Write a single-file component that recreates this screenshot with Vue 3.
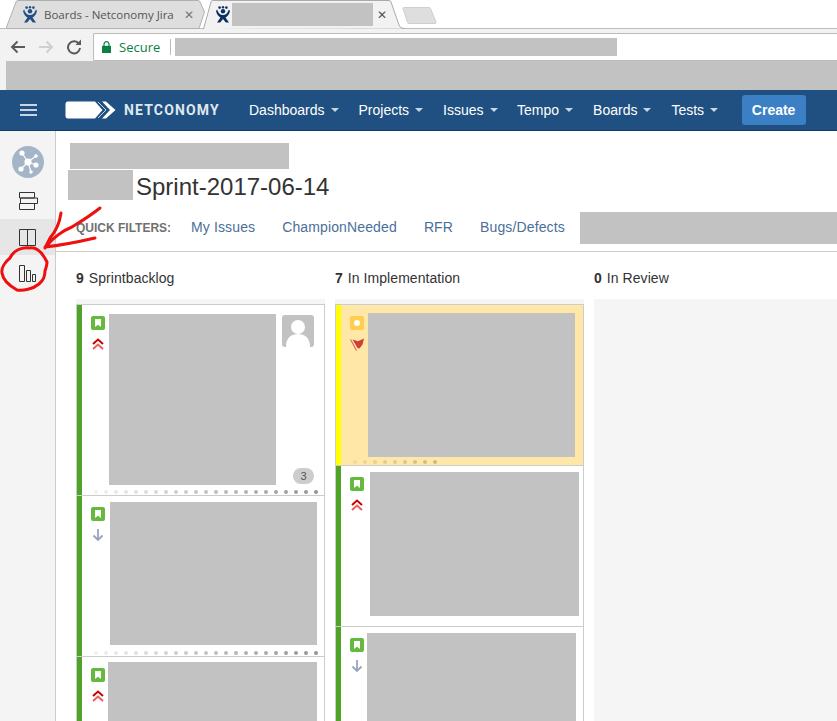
<script setup>
const navItems = ['Dashboards', 'Projects', 'Issues', 'Tempo', 'Boards', 'Tests']
const filters = ['My Issues', 'ChampionNeeded', 'RFR', 'Bugs/Defects']

const columns = [
  {
    count: 9,
    name: 'Sprintbacklog',
    cards: [
      { h: 191, top: 9, left: 4, w: 167, bh: 171, prio: 'high', dots: 23, avatar: true, badge: 3 },
      { h: 161, top: 6, left: 5, w: 207, bh: 143, prio: 'low', dots: 23 },
      { h: 70, top: 5, left: 3, w: 209, bh: 200, prio: 'high', dots: 0 }
    ]
  },
  {
    count: 7,
    name: 'In Implementation',
    cards: [
      { h: 161, top: 8, left: 4, w: 207, bh: 144, prio: 'flag', dots: 9, flagged: true },
      { h: 161, top: 6, left: 6, w: 209, bh: 144, prio: 'high', dots: 0 },
      { h: 100, top: 6, left: 3, w: 209, bh: 200, prio: 'low', dots: 0 }
    ]
  }
]

// 점점 진해지는 진행 점
function dotStyle(i, total) {
  const max = total > 10 ? 0.42 : 0.2
  return { background: `rgba(0,0,0,${(0.06 + (max - 0.06) * (i / (total - 1))).toFixed(3)})` }
}
function blockStyle(c) {
  return { marginTop: c.top + 'px', marginLeft: c.left + 'px', width: c.w + 'px', height: c.bh + 'px' }
}
</script>

<template>
  <div class="screen">
    <!-- 브라우저 탭 -->
    <div class="tabstrip">
      <div class="tab tab-back">
        <svg class="tab-shape" width="199" height="29" viewBox="0 0 199 29">
          <path d="M0 28.5 L10 2 Q10.5 0.5 12 0.5 H192 Q193.5 0.5 194 2 L198.5 12 L193 28.5 Z" fill="#dedede" stroke="#b0b0b0" />
        </svg>
        <svg class="favicon" width="14" height="17" viewBox="0 0 14 17">
          <circle cx="3.6" cy="1.6" r="1.3" fill="#205081" /><circle cx="7" cy="1.2" r="1.2" fill="#205081" /><circle cx="10.4" cy="1.6" r="1.3" fill="#205081" />
          <circle cx="7" cy="5.2" r="2.2" fill="#205081" />
          <path d="M1.2 3.5 C2.5 8 5 9 7 9 C9 9 11.5 8 12.8 3.5 L14 5 C13 9 11 11 9.5 11.5 L13 16.5 H9.8 L7 13 L4.2 16.5 H1 L4.5 11.5 C3 11 1 9 0 5 Z" fill="#205081" />
        </svg>
        <span class="tab-title">Boards - Netconomy Jira</span>
        <span class="tab-x">✕</span>
      </div>
      <div class="tab tab-front">
        <svg class="tab-shape" width="202" height="30" viewBox="0 0 202 30">
          <path d="M0 29 H0.5 L8 2 Q8.5 0.5 10 0.5 H186 Q187.5 0.5 188 2 L196 25 Q197 28.5 201 28.5 H202" fill="#f2f2f2" stroke="#aaa" />
        </svg>
        <svg class="favicon" width="14" height="17" viewBox="0 0 14 17">
          <circle cx="3.6" cy="1.6" r="1.3" fill="#0b2f63" /><circle cx="7" cy="1.2" r="1.2" fill="#0b2f63" /><circle cx="10.4" cy="1.6" r="1.3" fill="#0b2f63" />
          <circle cx="7" cy="5.2" r="2.2" fill="#0b2f63" />
          <path d="M1.2 3.5 C2.5 8 5 9 7 9 C9 9 11.5 8 12.8 3.5 L14 5 C13 9 11 11 9.5 11.5 L13 16.5 H9.8 L7 13 L4.2 16.5 H1 L4.5 11.5 C3 11 1 9 0 5 Z" fill="#0b2f63" />
        </svg>
        <span class="grey tab-block"></span>
        <span class="tab-x dark">✕</span>
      </div>
      <svg class="newtab" width="35" height="18" viewBox="0 0 35 18">
        <path d="M1 1.5 Q1 0.5 2 0.5 H27 Q28 0.5 28.5 1.5 L34 15 Q34.5 16.5 33 16.5 H7 Q6 16.5 5.5 15.5 Z" fill="#dedede" stroke="#cfcfcf" />
      </svg>
    </div>

    <!-- 주소창 -->
    <div class="toolbar">
      <svg class="tool" width="16" height="14" viewBox="0 0 16 14"><path d="M15 7 H2 M7.5 1.5 L2 7 L7.5 12.5" fill="none" stroke="#5a5a5a" stroke-width="1.9" /></svg>
      <svg class="tool" width="16" height="14" viewBox="0 0 16 14"><path d="M1 7 H14 M8.5 1.5 L14 7 L8.5 12.5" fill="none" stroke="#cfcfcf" stroke-width="1.9" /></svg>
      <svg class="tool" width="16" height="16" viewBox="0 0 16 16"><path d="M13 5 A6 6 0 1 0 14 9" fill="none" stroke="#5a5a5a" stroke-width="2" /><path d="M9.5 6 H15 V0.5 Z" fill="#5a5a5a" /></svg>
      <div class="omnibox">
        <svg class="lock" width="9" height="12" viewBox="0 0 9 12"><path d="M2 5 V3.2 A2.5 2.5 0 0 1 7 3.2 V5" fill="none" stroke="#0b8043" stroke-width="1.2" /><rect y="4.8" width="9" height="7.2" fill="#0b8043" /></svg>
        <span class="secure">Secure</span>
        <span class="omni-sep"></span>
        <span class="grey url-block"></span>
      </div>
    </div>
    <div class="bookmarks"><div class="grey bookmark-block"></div></div>

    <!-- Jira 상단 메뉴 -->
    <header class="nav">
      <svg class="burger" width="17" height="12" viewBox="0 0 17 12"><path d="M0 1 H17 M0 6 H17 M0 11 H17" stroke="#fff" stroke-width="1.6" /></svg>
      <svg class="logo" width="51" height="18" viewBox="0 0 51 18">
        <path d="M3 0.5 H30 L37.5 9 L30 17.5 H3 Q0.5 17.5 0.5 15 V3 Q0.5 0.5 3 0.5 Z" fill="#fff" />
        <path d="M33 1 L41 9 L33 17" fill="none" stroke="#cdd8e4" stroke-width="1" />
        <path d="M37 0.5 H41 L50.5 9 L41 17.5 H37 L45 9 Z" fill="#fff" />
      </svg>
      <span class="brand">NETCONOMY</span>
      <nav class="menu">
        <a v-for="item in navItems" :key="item" class="menu-item">{{ item }}<i class="caret"></i></a>
      </nav>
      <button class="create">Create</button>
    </header>

    <div class="page">
      <!-- 왼쪽 사이드바 -->
      <aside class="sidebar">
        <svg class="project" width="32" height="32" viewBox="0 0 32 32">
          <circle cx="16" cy="16" r="16" fill="#a5b5c8" />
          <path d="M16 16 L10 7 M16 16 L24 10 M16 16 L24 19 M16 16 L19 26 M16 16 L9 23" stroke="#fff" stroke-width="1.2" />
          <circle cx="16" cy="16" r="3.6" fill="#fff" />
          <circle cx="10" cy="7" r="2.6" fill="#fff" /><circle cx="24" cy="10" r="1.8" fill="#fff" /><circle cx="24" cy="19" r="2.6" fill="#fff" /><circle cx="19" cy="26" r="1.8" fill="#fff" /><circle cx="9" cy="23" r="2.6" fill="#fff" />
        </svg>
        <div class="side-item">
          <svg width="19" height="18" viewBox="0 0 19 18"><path d="M0.5 0.5 H15.5 V6 H0.5 Z M1.5 6 H18.5 V11.5 H1.5 Z M0.5 11.5 H15.5 V17.5 H0.5 Z" fill="none" stroke="#333" /></svg>
        </div>
        <div class="side-item active">
          <svg width="17" height="17" viewBox="0 0 17 17"><path d="M0.5 0.5 H16.5 V16.5 H0.5 Z M8.5 0.5 V16.5" fill="none" stroke="#333" /></svg>
        </div>
        <div class="side-item">
          <svg width="17" height="17" viewBox="0 0 17 17"><path d="M0.5 0.5 H5.5 V16.5 H0.5 Z M7.5 5.5 H11.5 V16.5 H7.5 Z M13.5 9.5 H16.5 V16.5 H13.5 Z" fill="none" stroke="#333" /></svg>
        </div>
      </aside>

      <main class="content">
        <div class="heading">
          <div class="grey crumb-block"></div>
          <div class="title-row">
            <div class="grey title-block"></div>
            <h1 class="title">Sprint-2017-06-14</h1>
          </div>
        </div>

        <div class="filters">
          <span class="filter-label">QUICK FILTERS:</span>
          <a v-for="f in filters" :key="f" class="filter">{{ f }}</a>
          <div class="grey filter-block"></div>
        </div>

        <div class="col-heads">
          <div v-for="col in columns" :key="col.name" class="col-head"><b>{{ col.count }}</b>{{ col.name }}</div>
          <div class="col-head"><b>0</b>In Review</div>
        </div>

        <div class="board">
          <section v-for="col in columns" :key="col.name" class="column">
            <article
              v-for="(card, i) in col.cards"
              :key="i"
              class="card"
              :class="{ flagged: card.flagged }"
              :style="{ height: card.h + 'px' }"
            >
              <div class="card-body">
                <div class="icons">
                  <span v-if="card.flagged" class="type type-yellow"><i></i></span>
                  <svg v-else class="type" width="14" height="14" viewBox="0 0 14 14">
                    <rect width="14" height="14" rx="2" fill="#63ba3c" />
                    <path d="M4 3 H10 V11 L7 8.8 L4 11 Z" fill="#fff" />
                  </svg>
                  <svg v-if="card.prio === 'high'" class="prio" width="14" height="12" viewBox="0 0 14 12">
                    <path d="M2 6 L7 1.5 L12 6" fill="none" stroke="#c00" stroke-width="2" />
                    <path d="M2 11 L7 6.5 L12 11" fill="none" stroke="#f15c5c" stroke-width="2" />
                  </svg>
                  <svg v-else-if="card.prio === 'low'" class="prio" width="14" height="12" viewBox="0 0 14 12">
                    <path d="M7 0 V11 M2.5 6.5 L7 11 L11.5 6.5" fill="none" stroke="#98a4bd" stroke-width="1.8" />
                  </svg>
                  <svg v-else class="prio" width="14" height="13" viewBox="0 0 14 13">
                    <path d="M0.5 1.5 L6.5 12.5" stroke="#d0685e" stroke-width="1.1" fill="none" />
                    <path d="M2.5 1.5 L8 3.2 L14 0.5 L12.5 6.5 L9.5 10.5 L7.5 10 Z" fill="#cf3f35" />
                  </svg>
                </div>
                <div class="grey" :style="blockStyle(card)"></div>
                <div v-if="card.avatar" class="side">
                  <svg class="avatar" width="32" height="32" viewBox="0 0 32 32">
                    <rect width="32" height="32" rx="3" fill="#c2c2c2" />
                    <circle cx="16" cy="12" r="7" fill="#fff" />
                    <path d="M4 32 C4 22 10 19 16 19 C22 19 28 22 28 32 Z" fill="#fff" />
                  </svg>
                  <span class="badge">{{ card.badge }}</span>
                </div>
              </div>
              <div v-if="card.dots" class="dots">
                <i v-for="n in card.dots" :key="n" :style="dotStyle(n - 1, card.dots)"></i>
              </div>
            </article>
          </section>
          <section class="column column-empty"></section>
        </div>
      </main>
    </div>

    <!-- 손으로 그린 빨간 표시 -->
    <svg class="scribble" width="110" height="100" viewBox="0 200 110 100">
      <path d="M47 262 C42 252 36 247 30 248 C22 247 14 250 10 258 C5 262 1 268 2 273 C3 281 10 286 17 290 C23 291 33 289 39 284 C44 280 45 276 45 271 C46 268 47 265 47 262 Z" fill="none" stroke="#ee0f0f" stroke-width="3" />
      <path d="M100 208 C90 216 80 222 72 227 C64 230 52 238 45 248 M61 213 C60 220 57 230 50 238 L45 248 M95 238 C82 241 64 245 45 247" fill="none" stroke="#ee0f0f" stroke-width="3" stroke-linecap="round" />
    </svg>
  </div>
</template>

<style scoped>
.screen {
  position: relative;
  width: 837px;
  height: 721px;
  overflow: hidden;
  background: #fff;
  font-family: "Liberation Sans", Arial, sans-serif;
  color: #333;
}
.grey {
  background: #c2c2c2;
  flex: none;
}

/* tabs */
.tabstrip {
  display: flex;
  height: 29px;
  padding-left: 6px;
  box-sizing: border-box;
  border-bottom: 1px solid #bdbdbd;
  font-family: "Open Sans", "Noto Sans", sans-serif;
}
.tab {
  position: relative;
  display: flex;
  align-items: center;
  height: 29px;
  flex: none;
}
.tab-shape {
  position: absolute;
  left: 0;
  top: 0;
}
.favicon {
  position: relative;
  flex: none;
}
.tab-back {
  width: 197px;
  padding-left: 17px;
  box-sizing: border-box;
}
.tab-front {
  width: 199px;
  padding-left: 13px;
  box-sizing: border-box;
  z-index: 1;
}
.tab-title {
  position: relative;
  margin-left: 7px;
  font-size: 11.5px;
  color: #555;
  white-space: nowrap;
}
.tab-block {
  position: relative;
  width: 141px;
  height: 23px;
  margin-left: 2px;
}
.tab-x {
  position: relative;
  margin-left: 10px;
  font-size: 12px;
  color: #777;
}
.tab-x.dark {
  margin-left: 4px;
  color: #555;
}
.newtab {
  margin: 7px 0 0 0;
  flex: none;
}

/* toolbar */
.toolbar {
  display: flex;
  align-items: center;
  height: 32px;
  padding: 4px 0 0 10px;
  box-sizing: border-box;
  background: #f2f2f2;
}
.tool {
  flex: none;
  margin-right: 12px;
}
.omnibox {
  display: flex;
  align-items: center;
  flex: 1;
  height: 28px;
  margin-left: -1px;
  padding-left: 8px;
  box-sizing: border-box;
  background: #fff;
  border: 1px solid #bbb;
  border-right: 0;
  border-radius: 2px 0 0 2px;
}
.secure {
  margin-left: 8px;
  font-family: "Open Sans", "Noto Sans", sans-serif;
  font-size: 13px;
  color: #0b8043;
}
.omni-sep {
  width: 1px;
  height: 16px;
  margin-left: 10px;
  background: #bbb;
}
.url-block {
  width: 442px;
  height: 18px;
  margin-left: 4px;
}
.bookmarks {
  height: 29px;
  padding-left: 6px;
  background: #f2f2f2;
}
.bookmark-block {
  height: 100%;
}

/* jira nav */
.nav {
  display: flex;
  align-items: center;
  height: 41px;
  padding-left: 20px;
  box-sizing: border-box;
  background: #205081;
  border-bottom: 1px solid #1a3a5c;
  color: #fff;
}
.burger {
  flex: none;
}
.logo {
  flex: none;
  margin-left: 28px;
}
.brand {
  margin-left: 8px;
  width: 95px;
  font-family: Roboto, sans-serif;
  font-weight: 700;
  font-size: 14px;
  letter-spacing: 1.15px;
  color: #dfe7ef;
  white-space: nowrap;
}
.menu {
  display: flex;
  margin-left: 20px;
}
.menu-item {
  display: flex;
  align-items: center;
  padding: 0 10px;
  font-size: 14px;
}
.menu-item:nth-child(3) {
  padding-right: 9.5px;
}
.caret {
  width: 0;
  height: 0;
  margin-left: 6px;
  border: 4px solid transparent;
  border-top-color: #c9d5e2;
  border-bottom: 0;
}
.create {
  width: 64px;
  height: 30px;
  margin-left: 13.5px;
  padding: 0;
  border: 0;
  border-radius: 3px;
  background: #3b7fc4;
  color: #fff;
  font: 700 14px "Liberation Sans", Arial, sans-serif;
}

/* page */
.page {
  display: flex;
  height: 590px;
}
.sidebar {
  display: flex;
  flex-direction: column;
  flex: none;
  width: 56px;
  box-sizing: border-box;
  padding-top: 15px;
  background: #f4f4f4;
  border-right: 1px solid #ccc;
}
.project {
  margin: 0 0 5px 12px;
}
.side-item {
  display: flex;
  align-items: center;
  height: 36px;
  padding-left: 19px;
}
.side-item.active {
  background: #e6e6e6;
}
.content {
  flex: 1;
  min-width: 0;
}
.heading {
  padding: 12px 0 0 12px;
}
.crumb-block {
  width: 219px;
  height: 26px;
  margin-left: 2px;
}
.title-row {
  display: flex;
  align-items: center;
  height: 30px;
  margin-top: 1px;
}
.title-block {
  width: 65px;
  height: 30px;
}
.title {
  margin: 0 0 0 3px;
  padding-top: 4px;
  font-size: 24px;
  font-weight: 400;
  color: #333;
  white-space: nowrap;
}
.filters {
  display: flex;
  align-items: center;
  height: 32px;
  margin-top: 12px;
  padding: 0 0 7px 20px;
  border-bottom: 1px solid #ccc;
}
.filter-label {
  width: 94px;
  flex: none;
  font-size: 12px;
  font-weight: 700;
  color: #707070;
  white-space: nowrap;
}
.filter {
  margin: 0 6px 2px 21px;
  font-size: 14px;
  letter-spacing: 0.13px;
  color: #4a6f9a;
  white-space: nowrap;
}
.filter-block {
  flex: 1;
  height: 32px;
  margin-left: 9px;
}
.col-heads {
  display: grid;
  grid-template-columns: 249px 249px 1fr;
  column-gap: 10px;
  margin-top: 18px;
  padding-left: 20px;
  font-size: 14px;
  letter-spacing: 0.06px;
  line-height: 16px;
  color: #333;
}
.col-head b {
  margin-right: 5px;
}
.board {
  display: grid;
  grid-template-columns: 249px 249px 1fr;
  column-gap: 10px;
  margin-top: 13px;
  padding-left: 20px;
}
.column {
  height: 430px;
  padding-top: 5px;
  box-sizing: border-box;
  background: #f5f5f5;
}
.card {
  display: flex;
  flex-direction: column;
  box-sizing: border-box;
  background: #fff;
  border-top: 1px solid #ccc;
  border-left: 1px solid #ccc;
  border-right: 1px solid #ccc;
  overflow: hidden;
}
.flagged {
  background: #ffe7a8;
}
.card-body {
  display: flex;
  flex: 1;
  min-height: 0;
  border-left: 5px solid #4fa326;
}
.flagged .card-body {
  border-left-color: #ffff00;
}
.icons {
  display: flex;
  flex-direction: column;
  align-items: center;
  flex: none;
  width: 14px;
  margin: 11px 0 0 9px;
}
.type {
  display: block;
  flex: none;
  width: 14px;
  height: 14px;
}
.type-yellow {
  display: flex;
  align-items: center;
  justify-content: center;
  border-radius: 2px;
  background: #ffce4e;
}
.type-yellow i {
  width: 6px;
  height: 6px;
  border-radius: 50%;
  background: #fff;
}
.prio {
  flex: none;
  margin-top: 8px;
}
.side {
  display: flex;
  flex-direction: column;
  align-items: flex-end;
  flex: none;
  width: 32px;
  margin-left: 6px;
  padding: 10px 0 6px;
  box-sizing: border-box;
}
.badge {
  margin-top: auto;
  width: 21px;
  height: 16px;
  border-radius: 8px;
  background: #ccc;
  color: #555;
  font-size: 11px;
  line-height: 16px;
  text-align: center;
}
.dots {
  display: flex;
  gap: 6px;
  flex: none;
  height: 4px;
  margin: 0 0 1px;
  padding-left: 17px;
  position: relative;
}
.dots::before {
  content: "";
  position: absolute;
  left: 0;
  top: -1px;
  width: 5px;
  height: 6px;
  background: #4fa326;
}
.flagged .dots::before {
  background: #ffff00;
}
.dots i {
  width: 4px;
  height: 4px;
  border-radius: 50%;
  flex: none;
}

.scribble {
  position: absolute;
  left: 0;
  top: 200px;
  pointer-events: none;
}
</style>

<style>
html, body {
  margin: 0;
  overflow: hidden;
  background: #fff;
}
</style>
